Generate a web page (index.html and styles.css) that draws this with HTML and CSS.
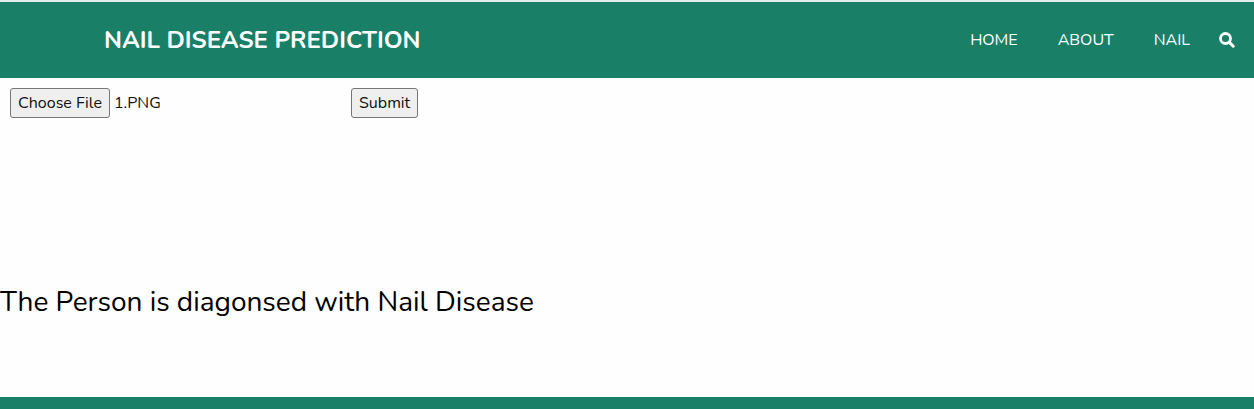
FILE: index.html
```html
<!DOCTYPE html>
<html lang="en">
<head>
<meta charset="utf-8">
<meta name="viewport" content="width=device-width, initial-scale=1">
<title>Nail Disease Prediction</title>
<link rel="stylesheet" href="styles.css">
</head>
<body>
<header class="header">
  <a class="brand" href="#">NAIL DISEASE PREDICTION</a>
  <nav class="nav">
    <a class="nav-link" href="#">HOME</a>
    <a class="nav-link" href="#">ABOUT</a>
    <a class="nav-link" href="#">NAIL</a>
    <button class="search" type="button" aria-label="Search">
      <svg class="search-icon" viewBox="0 0 16 16" aria-hidden="true">
        <circle cx="6.5" cy="6.5" r="5" fill="none" stroke="currentColor" stroke-width="2.8"/>
        <path d="M10.4 10.4L14.2 14.2" stroke="currentColor" stroke-width="3" stroke-linecap="round"/>
      </svg>
    </button>
  </nav>
</header>
<main class="main">
  <form class="upload">
    <input class="file" id="file" type="file" aria-label="Nail image">
    <button class="submit" type="submit">Submit</button>
  </form>
  <p class="result">The Person is diagonsed with Nail Disease</p>
</main>
<footer class="footer"></footer>
<script src="script.js"></script>
</body>
</html>
```

FILE: styles.css
```css
* {
  box-sizing: border-box;
}

body {
  margin: 0;
  min-height: 100vh;
  display: flex;
  flex-direction: column;
  background: #fefefe;
  color: #000;
  font-family: Nunito, Lato, sans-serif;
  font-size: 16px;
  line-height: 24px;
}

.header {
  display: flex;
  align-items: center;
  justify-content: space-between;
  padding: 20px 19px 20px 104px;
  border-top: 2px solid #e3efec;
  background: #1a7f67;
  color: #fff;
}

.brand {
  color: inherit;
  font-size: 24px;
  font-weight: 700;
  line-height: 36px;
  text-decoration: none;
}

.nav {
  display: flex;
  align-items: center;
}

.nav-link {
  margin-right: 40px;
  color: inherit;
  text-decoration: none;
}

.nav-link:nth-last-child(2) {
  margin-right: 29px;
}

.search {
  display: flex;
  padding: 0;
  border: 0;
  background: none;
  color: inherit;
}

.search-icon {
  width: 16px;
  height: 16px;
}

.main {
  flex: 1;
}

.upload {
  display: flex;
  align-items: center;
  padding: 10px;
}

.file {
  width: 341px;
  color: #111;
  font: inherit;
}

.file::file-selector-button,
.submit {
  height: 30px;
  padding: 1px 7px;
  border: 1px solid #767676;
  border-radius: 3px;
  background: #efefef;
  color: #111;
  font: inherit;
}

.file::file-selector-button {
  margin-right: 4px;
}

.result {
  margin: 156px 0 77px;
  font-size: 28px;
  font-weight: 400;
  line-height: 36px;
}

.footer {
  height: 12px;
  background: #1a7f67;
}
```

FILE: script.js
```js
const selection = new DataTransfer();
selection.items.add(new File([""], "1.PNG", { type: "image/png" }));
document.getElementById("file").files = selection.files;
```
